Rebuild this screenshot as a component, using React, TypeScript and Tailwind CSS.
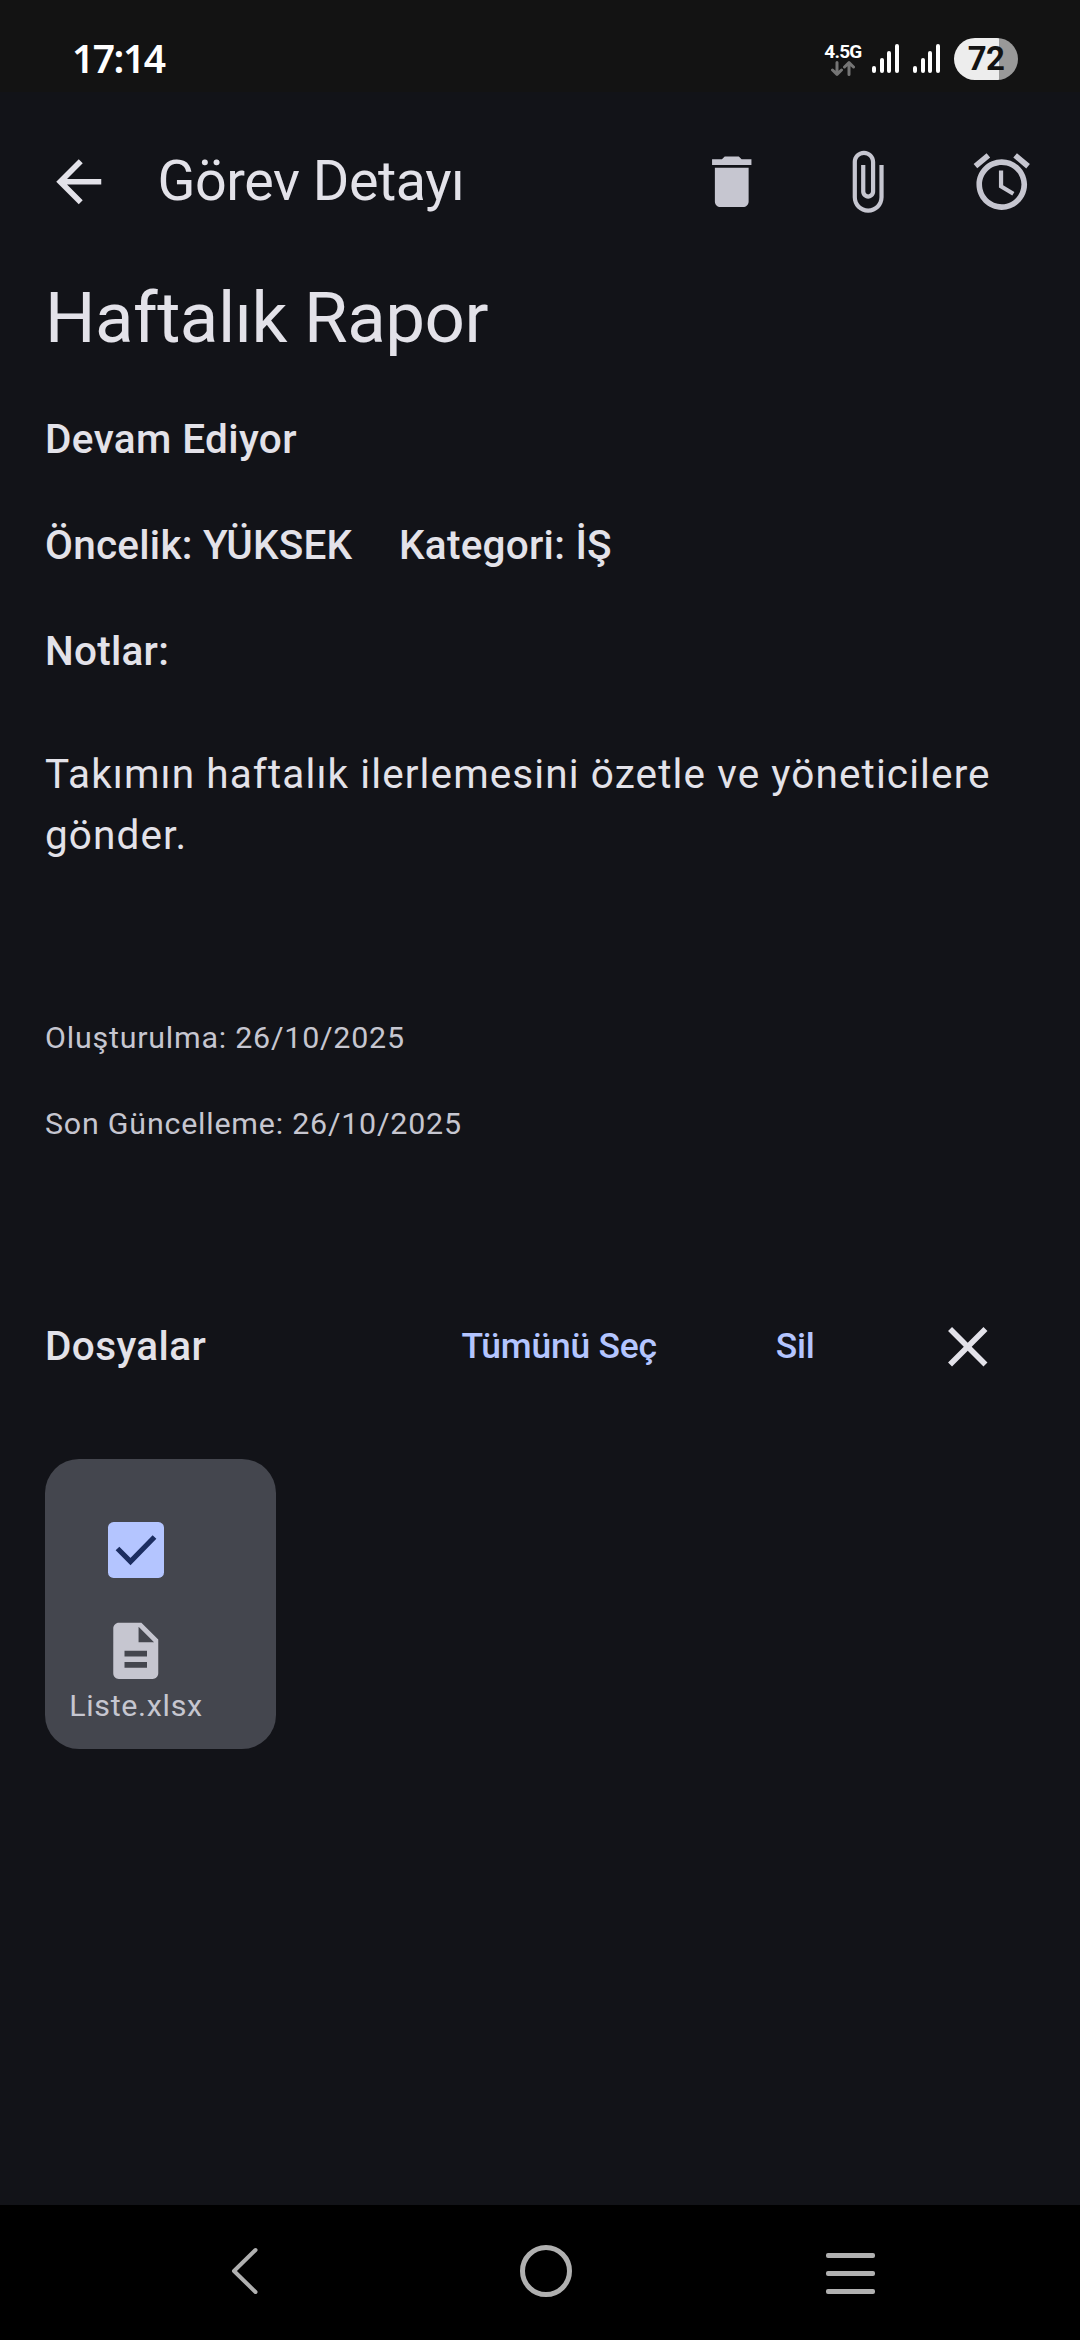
import type { ReactNode } from "react";

const paths = {
  back: "M20 11H7.83l5.59-5.59L12 4l-8 8 8 8 1.41-1.41L7.83 13H20v-2z",
  trash:
    "M6 19c0 1.1.9 2 2 2h8c1.1 0 2-.9 2-2V7H6v12zM19 4h-3.5l-1-1h-5l-1 1H5v2h14V4z",
  attach:
    "M16.5 6v11.5c0 2.21-1.79 4-4 4s-4-1.79-4-4V5c0-1.38 1.12-2.5 2.5-2.5s2.5 1.12 2.5 2.5v10.5c0 .55-.45 1-1 1s-1-.45-1-1V6H10v9.5c0 1.38 1.12 2.5 2.5 2.5s2.5-1.12 2.5-2.5V5c0-2.21-1.79-4-4-4S7 2.79 7 5v12.5c0 3.04 2.46 5.5 5.5 5.5s5.5-2.46 5.5-5.5V6h-1.5z",
  alarm:
    "M22 5.72l-4.6-3.86-1.29 1.53 4.6 3.86L22 5.72zM7.88 3.39L6.6 1.86 2 5.71l1.29 1.53 4.59-3.85zM12.5 8H11v6l4.75 2.85.75-1.23-4-2.37V8zM12 4c-4.97 0-9 4.03-9 9s4.02 9 9 9c4.97 0 9-4.03 9-9s-4.03-9-9-9zm0 16c-3.87 0-7-3.13-7-7s3.13-7 7-7 7 3.13 7 7-3.13 7-7 7z",
  close:
    "M19 6.41L17.59 5 12 10.59 6.41 5 5 6.41 10.59 12 5 17.59 6.41 19 12 13.41 17.59 19 19 17.59 13.41 12z",
  file: "M14 2H6c-1.1 0-1.99.9-1.99 2L4 20c0 1.1.89 2 1.99 2H18c1.1 0 2-.9 2-2V8l-6-6zm2 16H8v-2h8v2zm0-4H8v-2h8v2zm-3-5V3.5L18.5 9H13z",
};

function Icon({ d }: { d: string }) {
  return (
    <svg viewBox="0 0 24 24" fill="currentColor" className="block size-[67.5px] shrink-0">
      <path d={d} />
    </svg>
  );
}

function IconButton({ d, label }: { d: string; label: string }) {
  return (
    <button aria-label={label} className="flex size-[135px] shrink-0 items-center justify-center">
      <Icon d={d} />
    </button>
  );
}

function Signal() {
  return (
    <div className="flex h-[29px] items-end gap-[3.7px]">
      <span className="h-[7px] w-1 rounded-full bg-white" />
      <span className="h-[15px] w-1 rounded-full bg-white" />
      <span className="h-[22px] w-1 rounded-full bg-white" />
      <span className="h-[29px] w-1 rounded-full bg-white" />
    </div>
  );
}

function StatusBar() {
  return (
    <header className="flex h-[92px] items-start justify-between bg-[#131313] pr-[62px] pl-[72px] text-white">
      <span className="mt-[30px] font-['Noto_Sans'] text-[39px] leading-[56px] font-semibold tracking-[-1.5px]">
        17:14
      </span>
      <div className="flex items-start">
        <div className="mt-[42px] mr-[10.5px] flex w-[37px] flex-col items-center">
          <span className="text-[19px] leading-[19px] font-bold tracking-[-0.8px]">4.5G</span>
          <svg viewBox="0 0 24 15" className="block h-[15px] w-6" fill="none" stroke="#757575" strokeWidth="3" strokeLinecap="round" strokeLinejoin="round">
            <path d="M6 1.5V13M1.5 9 6 13.3 10.5 9M18 13.5V2M13.5 6 18 1.7 22.500 6" />
          </svg>
        </div>
        <div className="mt-11 flex gap-[14px]">
          <Signal />
          <Signal />
        </div>
        <div className="mt-[38px] ml-[14px] flex h-[42px] w-16 items-center justify-center rounded-full bg-[linear-gradient(90deg,#ededed_45px,#999999_45px)]">
          <span className="text-[33px] leading-[42px] font-bold tracking-[-0.8px] text-[#131313]">72</span>
        </div>
      </div>
    </header>
  );
}

function Title({ children, className = "tracking-[0.38px]" }: { children: ReactNode; className?: string }) {
  return (
    <p className={`text-[40.5px] leading-[60.75px] font-medium whitespace-nowrap ${className}`}>
      {children}
    </p>
  );
}

function Small({ children, className = "tracking-[0.79px]" }: { children: ReactNode; className?: string }) {
  return (
    <p className={`text-[30.4px] leading-[40.5px] whitespace-nowrap text-[#c6c6d0] ${className}`}>
      {children}
    </p>
  );
}

function TextButton({ children }: { children: ReactNode }) {
  return (
    <button className="min-w-[164.5px] px-[33.75px] pb-[2px] text-center text-[35.4px] leading-[50.6px] font-medium tracking-[-0.2px] whitespace-nowrap text-[#b4c5ff]">
      {children}
    </button>
  );
}

export default function App() {
  return (
    <div className="flex h-[2340px] w-[1080px] flex-col overflow-hidden bg-[#121318] font-[Roboto,sans-serif] text-[#e3e2e9]">
      <StatusBar />

      <div className="flex h-[180px] items-center px-[11.25px]">
        <IconButton d={paths.back} label="Geri" />
        <h1 className="ml-[11.25px] flex-1 pb-[2px] text-[55.7px] leading-[71px] tracking-[-0.45px] whitespace-nowrap">
          Görev Detayı
        </h1>
        <div className="flex text-[#c6c6d0]">
          <IconButton d={paths.trash} label="Görevi sil" />
          <IconButton d={paths.attach} label="Dosya ekle" />
          <IconButton d={paths.alarm} label="Hatırlatıcı" />
        </div>
      </div>

      <main className="flex flex-1 flex-col px-[45px]">
        <h2 className="text-[70.9px] leading-[91px] tracking-[-0.53px]">Haftalık Rapor</h2>
        <div className="mt-[45.5px] flex flex-col gap-[45.5px]">
          <Title>Devam Ediyor</Title>
          <div className="flex gap-[46.5px]">
            <Title className="tracking-[0.25px]">Öncelik: YÜKSEK</Title>
            <Title className="tracking-[0.25px]">Kategori: İŞ</Title>
          </div>
          <Title className="tracking-[0.25px]">Notlar:</Title>
        </div>
        <p className="mt-[62px] text-[40.5px] leading-[60.75px] tracking-[1.1px]">
          Takımın haftalık ilerlemesini özetle ve yöneticilere gönder.
        </p>
        <div className="mt-[152.4px] flex flex-col gap-[45.5px]">
          <Small>Oluşturulma: 26/10/2025</Small>
          <Small>Son Güncelleme: 26/10/2025</Small>
        </div>

        <div className="mt-[135.35px] flex h-[135px] items-center">
          <div className="flex-1 pb-[2px]">
            <Title>Dosyalar</Title>
          </div>
          <div className="flex items-center gap-[22.5px]">
            <TextButton>Tümünü Seç</TextButton>
            <TextButton>Sil</TextButton>
            <IconButton d={paths.close} label="Kapat" />
          </div>
        </div>

        <div className="mt-[44.5px] flex h-[290px] w-[231px] items-start rounded-[34px] bg-[#44464e] pt-[23.5px] pl-[23.500px]">
          <div className="flex flex-col items-center">
            <div className="flex size-[135px] items-center justify-center">
              <span className="flex size-14 items-center justify-center rounded-[5.6px] bg-[#b4c5ff]">
                <svg viewBox="0 0 56 56" className="block size-14" fill="none" stroke="#1b2d60" strokeWidth="5.2">
                  <path d="M9.500 26.500 22.500 39.500 46.500 15" />
                </svg>
              </span>
            </div>
            <span className="text-[#c6c6d0]">
              <Icon d={paths.file} />
            </span>
            <Small className="pt-[1.3px] tracking-[0.68px]">Liste.xlsx</Small>
          </div>
        </div>
      </main>

      <nav className="flex h-[135px] items-start bg-black pl-[230px] text-[#b0b0b0]">
        <svg viewBox="0 0 29 50" className="mt-[41px] block h-[50px] w-[29px]" fill="none" stroke="currentColor" strokeWidth="4" strokeLinecap="round" strokeLinejoin="round">
          <path d="M25.500 4 4 25 25.500 46" />
        </svg>
        <span className="mt-[39.5px] ml-[261px] block size-[52px] rounded-full border-[5px] border-current" />
        <div className="mt-[48px] ml-[253.500px] flex w-[49px] flex-col gap-[13px]">
          <span className="h-[5px] rounded-[2px] bg-current" />
          <span className="h-[5px] rounded-[2px] bg-current" />
          <span className="h-[5px] rounded-[2px] bg-current" />
        </div>
      </nav>
    </div>
  );
}
